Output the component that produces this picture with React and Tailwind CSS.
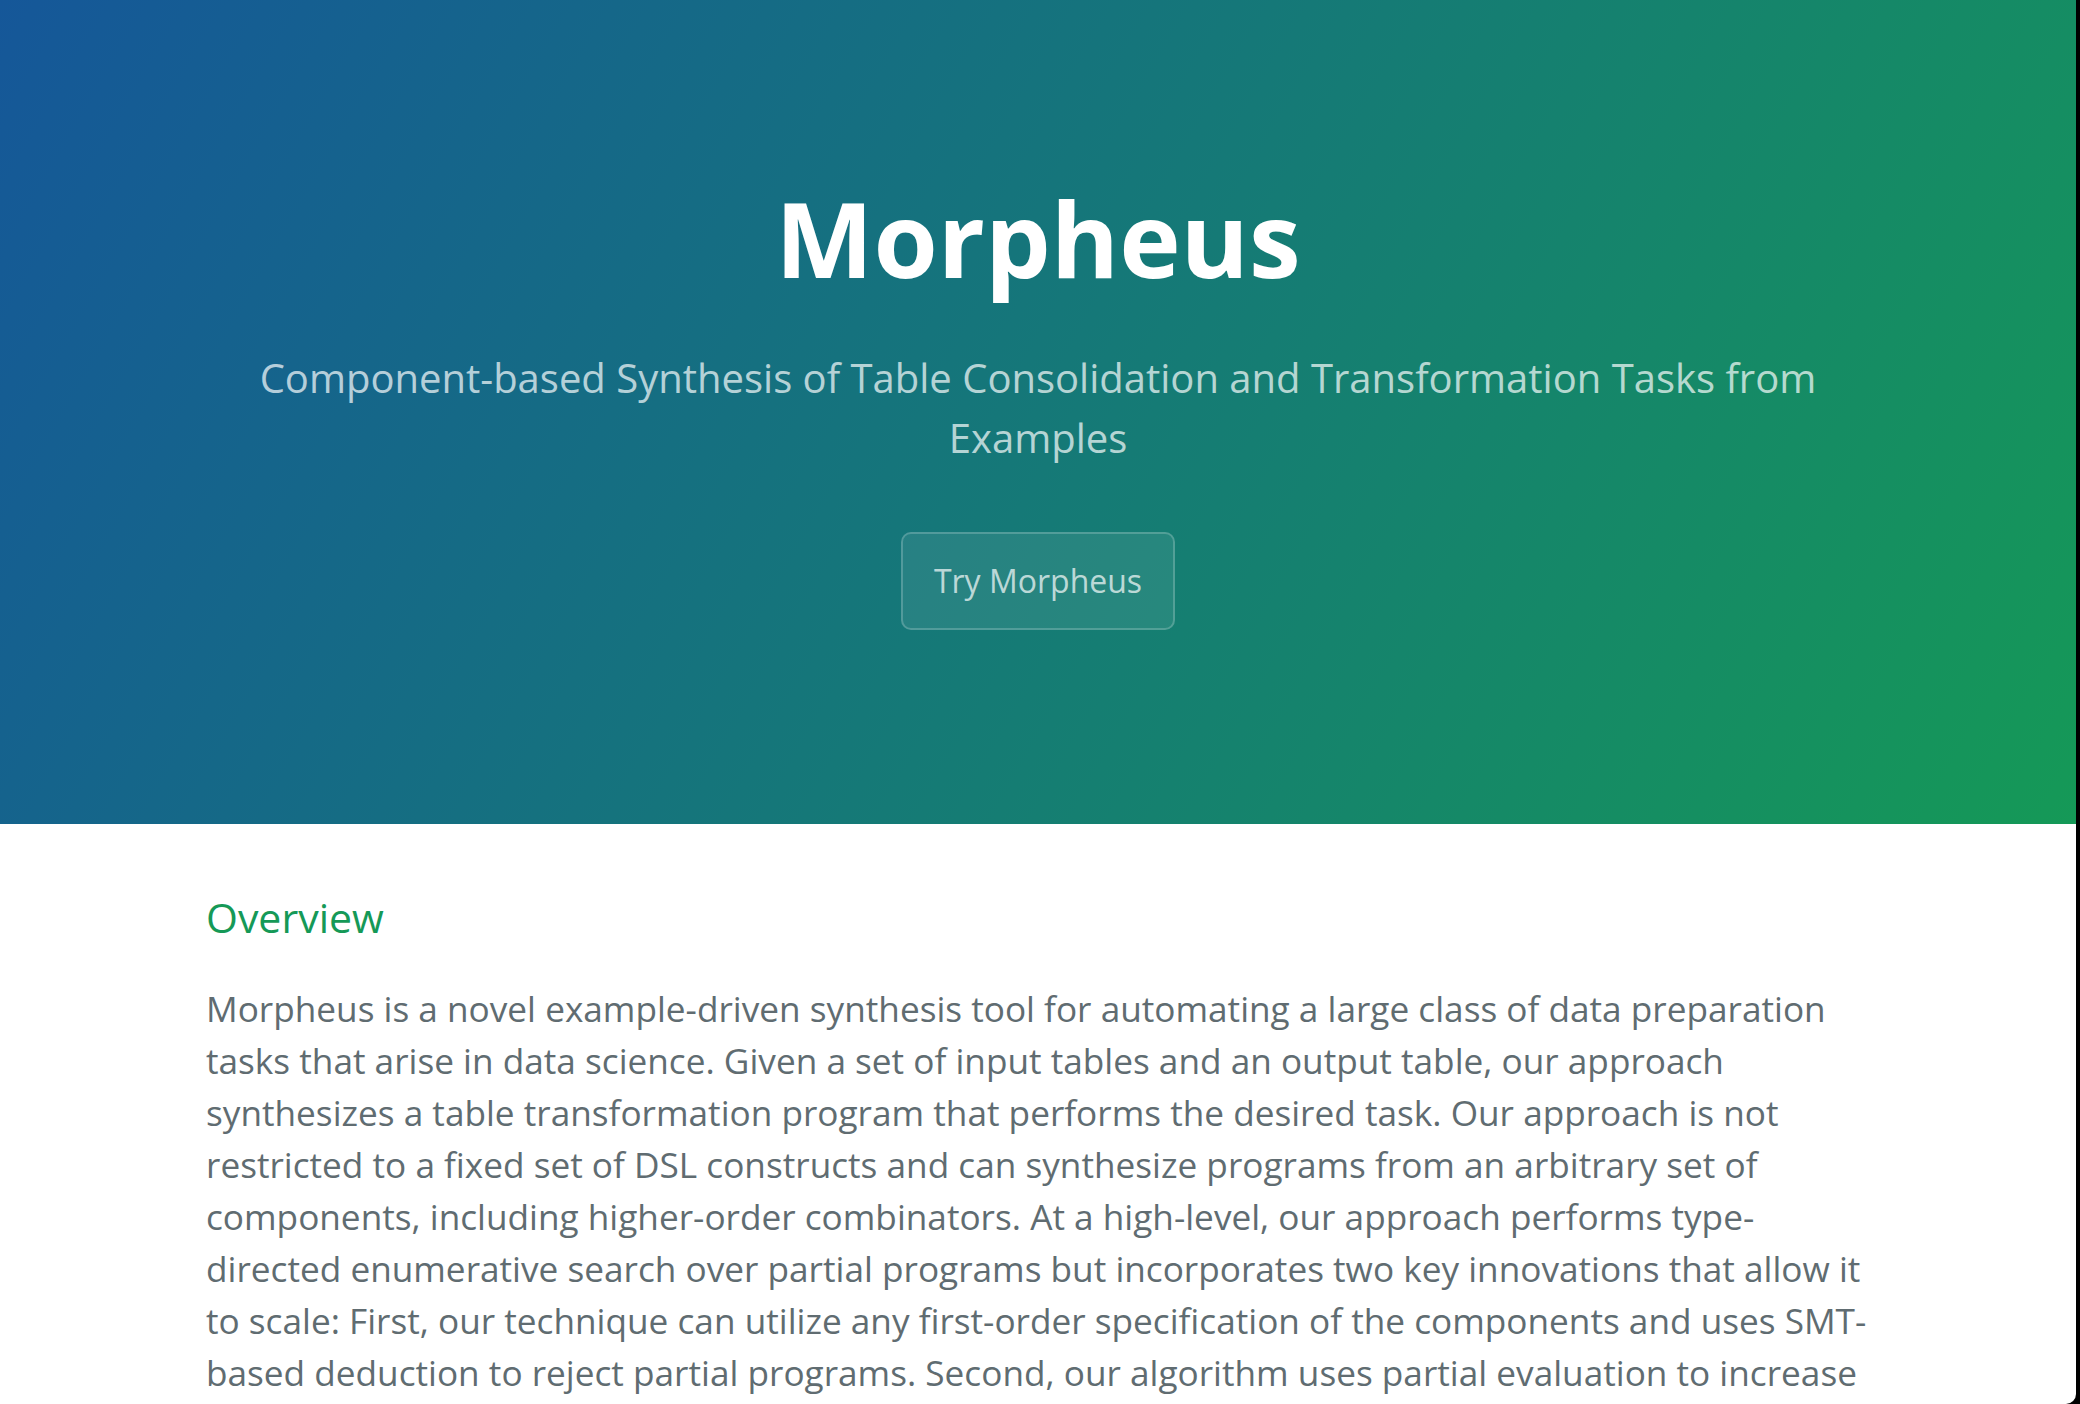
import React from 'react';

const OVERVIEW =
  'Morpheus is a novel example-driven synthesis tool for automating a large class of data preparation tasks that arise in data science. Given a set of input tables and an output table, our approach synthesizes a table transformation program that performs the desired task. Our approach is not restricted to a fixed set of DSL constructs and can synthesize programs from an arbitrary set of components, including higher-order combinators. At a high-level, our approach performs type-directed enumerative search over partial programs but incorporates two key innovations that allow it to scale: First, our technique can utilize any first-order specification of the components and uses SMT-based deduction to reject partial programs. Second, our algorithm uses partial evaluation to increase the power of deduction and drastically prune the search space. We have implemented the proposed approach in a tool called Morpheus and evaluate it on 80 data preparation tasks collected from on-line forums.';

function Header() {
  return (
    <section className="bg-[linear-gradient(120deg,#155799,#159957)] px-[192px] pt-[160px] pb-[162px] text-center text-white">
      <h1 className="m-0 text-[104px] leading-[156px] font-bold">Morpheus</h1>
      <h2 className="mt-[32px] mb-[64px] text-[40px] leading-[60px] font-normal text-white/70">
        Component-based Synthesis of Table Consolidation and Transformation Tasks from Examples
      </h2>
      <a
        href="#"
        className="mb-[32px] inline-block rounded-[10px] border-2 border-white/20 bg-white/[0.08] px-[31px] py-[23px] text-[32px] leading-[48px] text-white/70"
      >
        Try Morpheus
      </a>
    </section>
  );
}

function Overview() {
  return (
    <section className="mx-auto max-w-[2048px] px-[192px] pt-[62px] pb-[64px]">
      <h3 className="mb-[34px] text-[41px] leading-[62px] font-normal text-[#159957]">Overview</h3>
      <p className="text-[35.2px] leading-[52px] text-[#606c71]">{OVERVIEW}</p>
    </section>
  );
}

export default function App() {
  return (
    <div className="flex h-[1404px] w-[2080px] overflow-hidden bg-black font-['Open_Sans',sans-serif]">
      <div className="flex-1 overflow-hidden rounded-br-[10px] bg-white">
        <Header />
        <Overview />
      </div>
      <div className="w-[4px]" />
    </div>
  );
}
